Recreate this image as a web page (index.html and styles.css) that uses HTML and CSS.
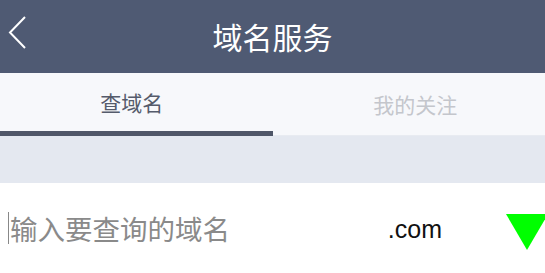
FILE: index.html
```html
<!DOCTYPE html>
<html lang="zh-CN">
<head>
    <meta charset="UTF-8">
    <meta name="viewport" content="width=device-width, initial-scale=1.0">
    <title>域名服务</title>
    <link rel="stylesheet" href="styles.css">
</head>
<body>
    <div class="header">
        <a class="back" href="#">
            <svg width="22" height="34" viewBox="0 0 22 34">
                <polyline points="18,1 3,16.5 18,32" fill="none" stroke="#fff" stroke-width="2"/>
            </svg>
        </a>
        <h1>域名服务</h1>
    </div>

    <div class="tabs">
        <div class="tab active">查域名</div>
        <div class="tab">我的关注</div>
    </div>

    <div class="gap"></div>

    <div class="search-row">
        <span class="caret"></span>
        <input type="text" class="domain-input" placeholder="输入要查询的域名">
        <span class="suffix">.com</span>
        <span class="arrow"></span>
    </div>
</body>
</html>
```

FILE: styles.css
```css
body {
    margin: 0;
    background-color: #fff;
    font-family: "Noto Sans CJK SC", "Liberation Sans", sans-serif;
    overflow: hidden;
}
.header {
    height: 73px;
    background-color: #4f5a73;
    display: flex;
    align-items: center;
    justify-content: center;
    position: relative;
}
.header h1 {
    margin: 0 0 2px 0;
    color: #fff;
    font-size: 30px;
    font-weight: 400;
}
.back {
    position: absolute;
    left: 7px;
    top: 16px;
    display: block;
}
.tabs {
    display: flex;
    height: 63px;
    background-color: #f7f8fb;
}
.tab {
    width: 50%;
    flex: none;
    display: flex;
    align-items: center;
    justify-content: center;
    font-size: 21px;
    color: #c4c6cc;
    box-sizing: border-box;
    border-bottom: 1px solid #e8ebf1;
    padding-left: 13px;
}
.tab.active {
    color: #555b6b;
    border-bottom: 5px solid #4f5668;
    padding-left: 0;
    padding-right: 9px;
}
.gap {
    height: 47px;
    background-color: #e4e8f0;
}
.search-row {
    display: flex;
    align-items: center;
    height: 90px;
    padding-left: 8px;
}
.caret {
    width: 1px;
    height: 32px;
    background-color: #888;
}
.domain-input {
    flex: 1;
    border: none;
    outline: none;
    padding: 0 0 0 1px;
    font-family: "Noto Sans CJK SC", sans-serif;
    font-size: 27.5px;
    color: #333;
    background: transparent;
    min-width: 0;
}
.domain-input::placeholder {
    color: #8a8a8a;
}
.suffix {
    font-family: "Liberation Sans", Arial, sans-serif;
    font-size: 25px;
    color: #111;
    margin-right: 64px;
    margin-top: 2px;
}
.arrow {
    width: 0;
    height: 0;
    border-left: 21px solid transparent;
    border-right: 21px solid transparent;
    border-top: 36px solid #00ff00;
    margin-right: -3px;
    margin-top: 8px;
}
```
